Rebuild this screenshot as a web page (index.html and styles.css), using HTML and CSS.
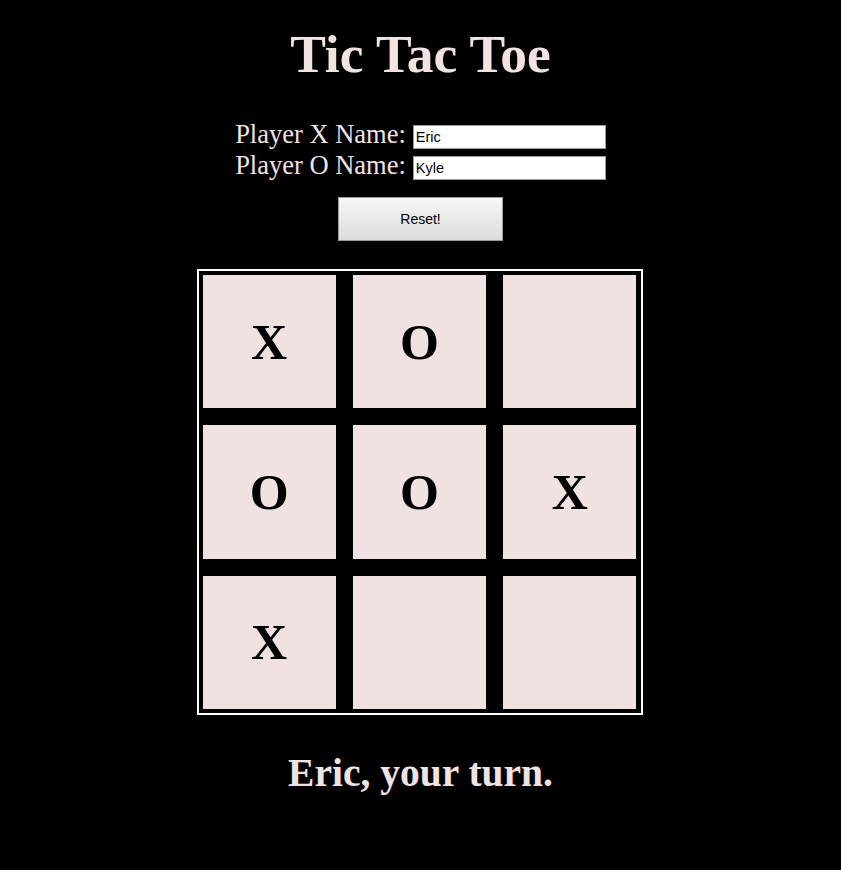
FILE: index.html
```html
<!DOCTYPE html>
<html>
<head>
<meta charset="utf-8">
<title>Tic Tac Toe</title>
<link rel="stylesheet" href="styles.css">
</head>
<body>
<h1 class="title">Tic Tac Toe</h1>
<div class="players">
  <div class="player-row">
    <label class="player-label" for="px">Player X Name:</label>
    <input class="player-input" id="px" type="text" value="Eric">
  </div>
  <div class="player-row">
    <label class="player-label" for="po">Player O Name:</label>
    <input class="player-input" id="po" type="text" value="Kyle">
  </div>
</div>
<div class="actions">
  <button class="reset-btn" type="button">Reset!</button>
</div>
<div class="board-wrap">
  <div class="board">
    <div class="cell">X</div>
    <div class="cell">O</div>
    <div class="cell"></div>
    <div class="cell">O</div>
    <div class="cell">O</div>
    <div class="cell">X</div>
    <div class="cell">X</div>
    <div class="cell"></div>
    <div class="cell"></div>
  </div>
</div>
<h2 class="status">Eric, your turn.</h2>
</body>
</html>
```
FILE: styles.css
```css
html, body {
  background: #000;
}
body {
  margin: 0;
  color: #f2e3e3;
  font-family: "Liberation Serif", "Times New Roman", serif;
}
.title {
  margin: 26px 0 0;
  text-align: center;
  font-size: 53.5px;
  line-height: 56px;
  font-weight: bold;
}
.players {
  margin-top: 43px;
  display: flex;
  flex-direction: column;
  align-items: center;
  gap: 7px;
}
.player-row {
  display: flex;
  align-items: center;
  gap: 7px;
}
.player-label {
  font-size: 26.5px;
  line-height: 24px;
  position: relative;
  top: -3px;
}
.player-input {
  box-sizing: border-box;
  width: 193px;
  height: 24px;
  margin: 0;
  padding: 1px 2px;
  border: 1px solid #9a9a9a;
  background: #fff;
  color: #000;
  font-family: "Liberation Sans", Arial, sans-serif;
  font-size: 14.5px;
  outline: none;
}
.actions {
  display: flex;
  justify-content: center;
  margin-top: 17px;
}
.reset-btn {
  box-sizing: border-box;
  width: 165px;
  height: 44px;
  border: 1px solid #9a9a9a;
  border-radius: 0;
  background: linear-gradient(#f6f6f6, #dcdcdc);
  color: #000;
  font-family: "Liberation Sans", Arial, sans-serif;
  font-size: 14px;
}
.board-wrap {
  display: flex;
  justify-content: center;
  margin-top: 28px;
}
.board {
  box-sizing: border-box;
  width: 446px;
  height: 446px;
  margin-right: 2px;
  border: 2px solid #fff;
  padding: 4px;
  background: #000;
  display: grid;
  grid-template-columns: repeat(3, 1fr);
  grid-template-rows: repeat(3, 1fr);
  gap: 17px;
}
.cell {
  background: #f1e2e2;
  color: #000;
  display: flex;
  align-items: center;
  justify-content: center;
  font-size: 50px;
  font-weight: bold;
}
.status {
  margin: 30px 0 0;
  text-align: center;
  font-size: 39.5px;
  line-height: 56px;
  font-weight: bold;
}
```
